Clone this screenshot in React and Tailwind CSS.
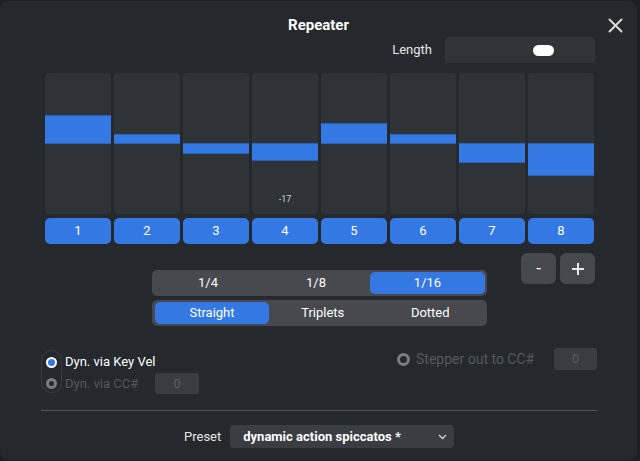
import React from "react";

const bars = [
  { up: 29, down: 0 },
  { up: 10, down: 0 },
  { up: 0, down: 11 },
  { up: 0, down: 18, label: "-17" },
  { up: 21, down: 0 },
  { up: 10, down: 0 },
  { up: 0, down: 20 },
  { up: 0, down: 33 },
];

export default function App() {
  return (
    <div className="w-[640px] h-[461px] bg-[#1d1f23] overflow-hidden" style={{ fontFamily: "Roboto, 'Noto Sans', sans-serif" }}>
      <div className="w-[637px] h-[459px] mt-[1px] bg-[#25282d] rounded-[8px] relative flex flex-col">
        {/* title */}
        <div className="h-[48px] pt-[14px] flex justify-center relative">
          <span className="text-white font-bold text-[15px] leading-[20px]">Repeater</span>
          <svg className="absolute right-[14px] top-[17px]" width="15" height="15" viewBox="0 0 15 15">
            <path d="M1.5 1.5 L13.5 13.5 M13.5 1.5 L1.5 13.5" stroke="#d9dadc" strokeWidth="2" strokeLinecap="round" />
          </svg>
        </div>
        {/* length */}
        <div className="flex items-center justify-end pr-[42px] -mt-[12px] h-[26px]">
          <span className="text-[#e6e7e8] text-[13px] mr-[13px]">Length</span>
          <div className="w-[150px] h-[26px] bg-[#303338] rounded-[4px] relative">
            <div className="absolute left-[88px] top-[8px] w-[21px] h-[11px] rounded-full bg-white" />
          </div>
        </div>
        {/* steps */}
        <div className="ml-[45px] mt-[10px] flex gap-[3px]">
          {bars.map((b, i) => (
            <div key={i} className="w-[66px] flex flex-col gap-[4px]">
              <div className="h-[141px] bg-[#2f3237] rounded-[4px] relative overflow-hidden">
                {b.up > 0 && (
                  <div className="absolute left-0 right-0 bg-[#3478e4] border-y border-[#2b5fb3]" style={{ top: 71 - b.up, height: b.up }} />
                )}
                {b.down > 0 && (
                  <div className="absolute left-0 right-0 bg-[#3478e4] border-y border-[#2b5fb3]" style={{ top: 70, height: b.down }} />
                )}
                {b.label && (
                  <div className="absolute left-0 right-0 bottom-[8px] text-center text-[9px] text-[#d0d1d3]">{b.label}</div>
                )}
              </div>
              <div className="h-[26px] bg-[#3478e4] rounded-[5px] flex items-center justify-center text-white text-[13px]">
                {i + 1}
              </div>
            </div>
          ))}
        </div>
        {/* segmented + buttons */}
        <div className="relative mt-[28px] h-[58px]">
          <div className="absolute left-[152px] top-[-2px] flex flex-col gap-[4px]">
            <div className="w-[335px] h-[26px] bg-[#47494e] rounded-[5px] flex items-center px-[2px]">
              <div className="flex-1 h-[22px] flex items-center justify-center text-white text-[13px]">1/4</div>
              <div className="flex-1 h-[22px] flex items-center justify-center text-white text-[13px]">1/8</div>
              <div className="w-[115px] h-[22px] rounded-[5px] bg-[#3478e4] flex items-center justify-center text-white text-[13px]">1/16</div>
            </div>
            <div className="w-[335px] h-[26px] bg-[#47494e] rounded-[5px] flex items-center px-[3px]">
              <div className="w-[114px] h-[22px] rounded-[5px] bg-[#3478e4] flex items-center justify-center text-white text-[13px]">Straight</div>
              <div className="flex-1 h-[22px] flex items-center justify-center text-white text-[13px]">Triplets</div>
              <div className="flex-1 h-[22px] flex items-center justify-center text-white text-[13px]">Dotted</div>
            </div>
          </div>
          <div className="absolute left-[521px] top-[-19px] flex gap-[4px]">
            <div className="w-[35px] h-[31px] bg-[#46484d] rounded-[6px] flex items-center justify-center text-white text-[17px] leading-none">-</div>
            <div className="w-[35px] h-[31px] bg-[#46484d] rounded-[6px] flex items-center justify-center">
              <svg width="14" height="14" viewBox="0 0 14 14"><path d="M7 1 V13 M1 7 H13" stroke="#e8e8e9" strokeWidth="2" /></svg>
            </div>
          </div>
        </div>
        {/* radios */}
        <div className="relative h-[70px] mt-[10px]">
          <div className="absolute left-[41px] top-[10px] w-[21px] h-[43px] rounded-full border border-[#3a3d42]" />
          <div className="absolute left-[46px] top-[14px] h-[16px] flex items-center gap-[8px]">
            <div className="w-[11px] h-[11px] rounded-full bg-white flex items-center justify-center">
              <div className="w-[7px] h-[7px] rounded-full bg-[#3478e4]" />
            </div>
            <span className="text-white text-[13px] leading-[16px]">Dyn. via Key Vel</span>
          </div>
          <div className="absolute left-[46px] top-[33px] h-[21px] flex items-center gap-[8px]">
            <div className="w-[11px] h-[11px] rounded-full border-[3px] border-[#7b7d81]" />
            <span className="text-[#55585d] text-[13px] leading-[16px] w-[82px]">Dyn. via CC#</span>
            <div className="w-[44px] h-[21px] rounded-[3px] bg-[#3a3c41] flex items-center justify-center text-[#5d6065] text-[12px]">0</div>
          </div>
          <div className="absolute left-[397px] top-[8px] h-[22px] flex items-center gap-[6px]">
            <div className="w-[13px] h-[13px] rounded-full border-[3px] border-[#7b7d81]" />
            <span className="text-[#55585d] text-[14px] leading-[16px] w-[132px]">Stepper out to CC#</span>
            <div className="w-[43px] h-[22px] rounded-[3px] bg-[#3a3c41] flex items-center justify-center text-[#5d6065] text-[12px]">0</div>
          </div>
        </div>
        {/* divider */}
        <div className="mx-[41px] w-[556px] h-[1px] bg-[#55575b]" />
        {/* preset */}
        <div className="flex items-center mt-[14px] ml-[184px]">
          <span className="text-[#e6e7e8] text-[13px] mr-[9px]">Preset</span>
          <div className="w-[224px] h-[23px] bg-[#3a3d42] rounded-[4px] flex items-center px-[13px] relative">
            <span className="text-white text-[13px] font-bold">dynamic action spiccatos *</span>
            <svg className="absolute right-[7px] top-[9px]" width="9" height="6" viewBox="0 0 9 6">
              <path d="M1 1 L4.5 4.5 L8 1" stroke="#cfd0d2" strokeWidth="1.3" fill="none" />
            </svg>
          </div>
        </div>
      </div>
    </div>
  );
}
